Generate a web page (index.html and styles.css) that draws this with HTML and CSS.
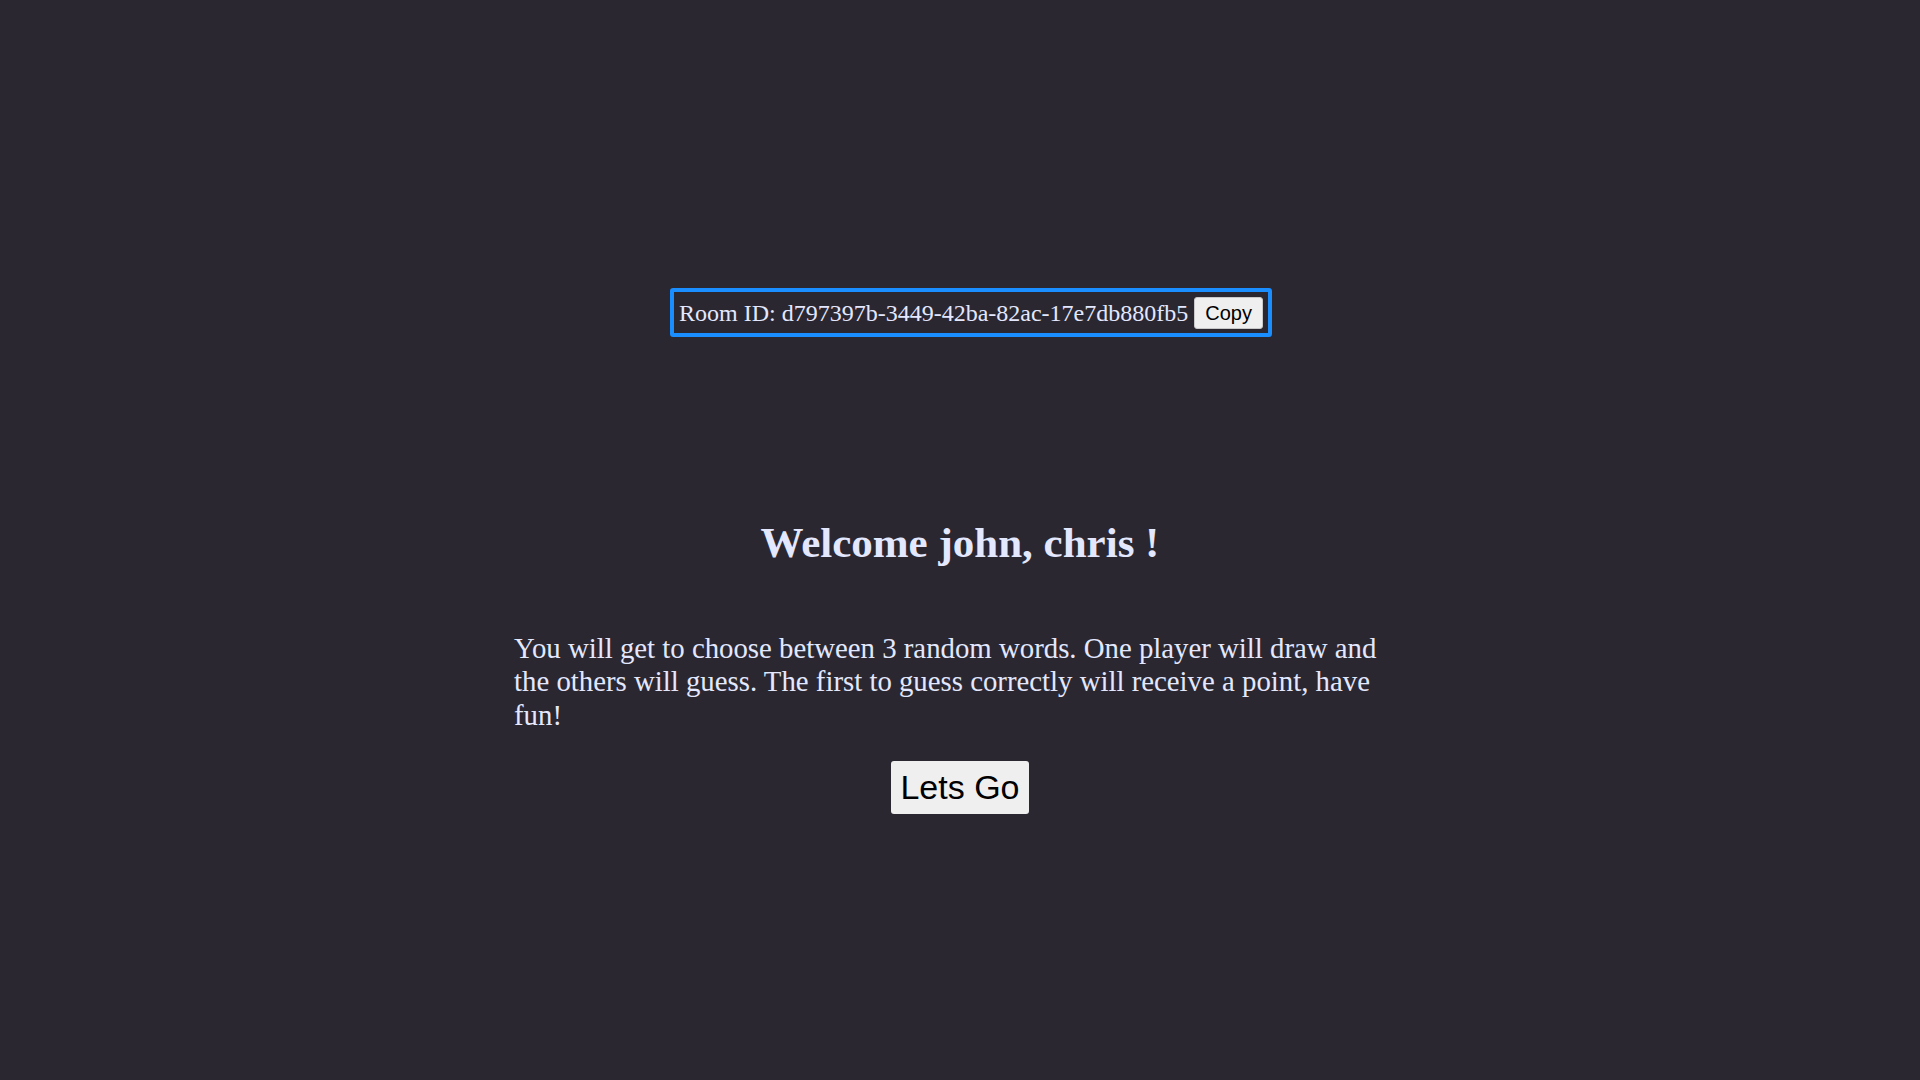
FILE: index.html
```html
<!DOCTYPE html>
<html lang="en">
<head>
<meta charset="utf-8">
<title>Lobby</title>
<link rel="stylesheet" href="styles.css">
</head>
<body>
  <div class="page">
    <div class="room">
      <div class="room-box">
        <span class="room-id">Room ID: d797397b-3449-42ba-82ac-17e7db880fb5</span>
        <button class="copy-btn">Copy</button>
      </div>
    </div>
    <h1 class="welcome">Welcome john, chris !</h1>
    <p class="rules">You will get to choose between 3 random words. One player will draw and the others will guess. The first to guess correctly will receive a point, have fun!</p>
    <div class="actions">
      <button class="go-btn">Lets Go</button>
    </div>
  </div>
</body>
</html>
```

FILE: styles.css
```css
html, body {
  margin: 0;
  padding: 0;
}

body {
  background: #2a2731;
  color: #e3e8ff;
  font-family: "Liberation Serif", "Times New Roman", serif;
  min-height: 100vh;
}

.page {
  display: flex;
  flex-direction: column;
  align-items: center;
  padding-top: 288px;
}

.room {
  display: flex;
  justify-content: center;
  margin-left: 22px;
}

.room-box {
  display: flex;
  align-items: center;
  gap: 6px;
  border: 4px solid #1a8dff;
  border-radius: 3px;
  padding: 5px 5px 4px 5px;
}

.room-id {
  font-size: 24px;
  line-height: 28px;
  white-space: nowrap;
}

.copy-btn {
  font-family: "Liberation Sans", Arial, sans-serif;
  font-size: 20px;
  line-height: 23px;
  color: #000;
  background: #efefef;
  border: 1px solid #c9c9c9;
  border-radius: 3px;
  padding: 4px 10px 3px;
  margin: 0;
}

.welcome {
  font-size: 43px;
  font-weight: bold;
  margin: 181px 0 0;
  text-align: center;
}

.rules {
  width: 892px;
  font-size: 28.8px;
  line-height: 33.4px;
  margin: 65px 0 29px;
  text-align: left;
}

.actions {
  display: flex;
  justify-content: center;
}

.go-btn {
  font-family: "Liberation Sans", Arial, sans-serif;
  font-size: 34px;
  line-height: 39px;
  color: #000;
  background: #efefef;
  border: none;
  border-radius: 3px;
  padding: 7px 9px;
  margin: 0;
}
```
